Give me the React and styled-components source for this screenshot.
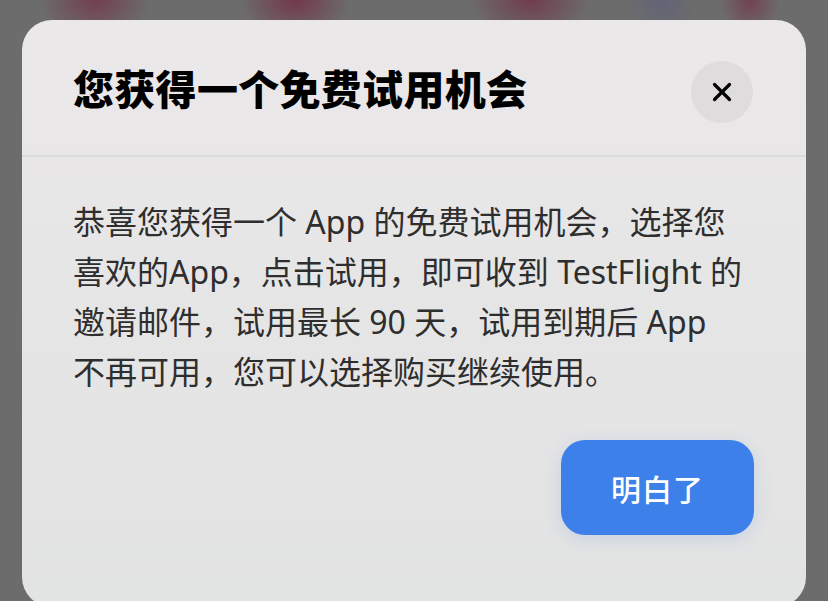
import styled, { createGlobalStyle } from 'styled-components';

const GlobalStyle = createGlobalStyle`
  html, body {
    margin: 0;
    padding: 0;
    background: #6c6c6c;
  }
`;

const Page = styled.div`
  width: 828px;
  height: 601px;
  overflow: hidden;
  box-sizing: border-box;
  padding: 20px 22px 0;
  background:
    radial-gradient(ellipse 55px 40px at 95px 0px, rgba(115, 55, 75, 0.85), transparent),
    radial-gradient(ellipse 55px 40px at 295px 0px, rgba(115, 50, 72, 0.9), transparent),
    radial-gradient(ellipse 60px 40px at 530px 0px, rgba(112, 55, 75, 0.9), transparent),
    radial-gradient(ellipse 35px 36px at 662px 0px, rgba(95, 95, 125, 0.7), transparent),
    radial-gradient(ellipse 30px 36px at 750px 0px, rgba(115, 55, 75, 0.8), transparent),
    #6c6c6c;
  font-family: 'Noto Sans', 'Noto Sans CJK SC', sans-serif;
`;

const Dialog = styled.div`
  height: 587px;
  border-radius: 30px;
  background: linear-gradient(180deg, #ebe8ea 0%, #e7e6e7 40%, #e2e3e3 100%);
  display: flex;
  flex-direction: column;
  overflow: hidden;
`;

const Header = styled.div`
  height: 137px;
  box-sizing: border-box;
  padding: 3px 53px 0 51px;
  display: flex;
  align-items: center;
  justify-content: space-between;
  border-bottom: 2px solid #dcdbdc;
`;

const Title = styled.h1`
  margin: 0 0 4px;
  font-family: 'Noto Sans CJK SC', sans-serif;
  font-size: 41px;
  font-weight: 800;
  color: #000;
  letter-spacing: 0.3px;
`;

const CloseButton = styled.button`
  width: 62px;
  height: 62px;
  border: none;
  border-radius: 50%;
  background: #dedcdd;
  display: flex;
  align-items: center;
  justify-content: center;
  padding: 0;
  margin-top: 6px;
  cursor: pointer;
`;

const Body = styled.div`
  padding: 40px 51px 0;
  display: flex;
  flex-direction: column;
`;

const Message = styled.p`
  margin: 0;
  font-size: 32px;
  line-height: 50px;
  color: #2e2e2e;
  white-space: nowrap;
`;

const Actions = styled.div`
  display: flex;
  justify-content: flex-end;
  margin-top: 43px;
  padding-right: 1px;
`;

const PrimaryButton = styled.button`
  width: 193px;
  height: 95px;
  border: none;
  border-radius: 24px;
  background: #3d80ea;
  color: #fff;
  font-family: 'Noto Sans CJK SC', sans-serif;
  font-size: 30px;
  font-weight: 500;
  letter-spacing: 1px;
  box-shadow: 0 4px 18px rgba(70, 130, 230, 0.18);
  cursor: pointer;
`;

function CloseIcon() {
  return (
    <svg width="20" height="20" viewBox="0 0 20 20">
      <path d="M2.5 2.5 L17.5 17.5 M17.5 2.5 L2.5 17.5" stroke="#000" strokeWidth="3.2" strokeLinecap="round" />
    </svg>
  );
}

export default function App() {
  return (
    <>
      <GlobalStyle />
      <Page>
        <Dialog>
          <Header>
            <Title>您获得一个免费试用机会</Title>
            <CloseButton aria-label="关闭">
              <CloseIcon />
            </CloseButton>
          </Header>
          <Body>
            <Message>
              恭喜您获得一个 App 的免费试用机会，选择您
              <br />
              喜欢的App，点击试用，即可收到 TestFlight 的
              <br />
              邀请邮件，试用最长 90 天，试用到期后 App
              <br />
              不再可用，您可以选择购买继续使用。
            </Message>
            <Actions>
              <PrimaryButton>明白了</PrimaryButton>
            </Actions>
          </Body>
        </Dialog>
      </Page>
    </>
  );
}
